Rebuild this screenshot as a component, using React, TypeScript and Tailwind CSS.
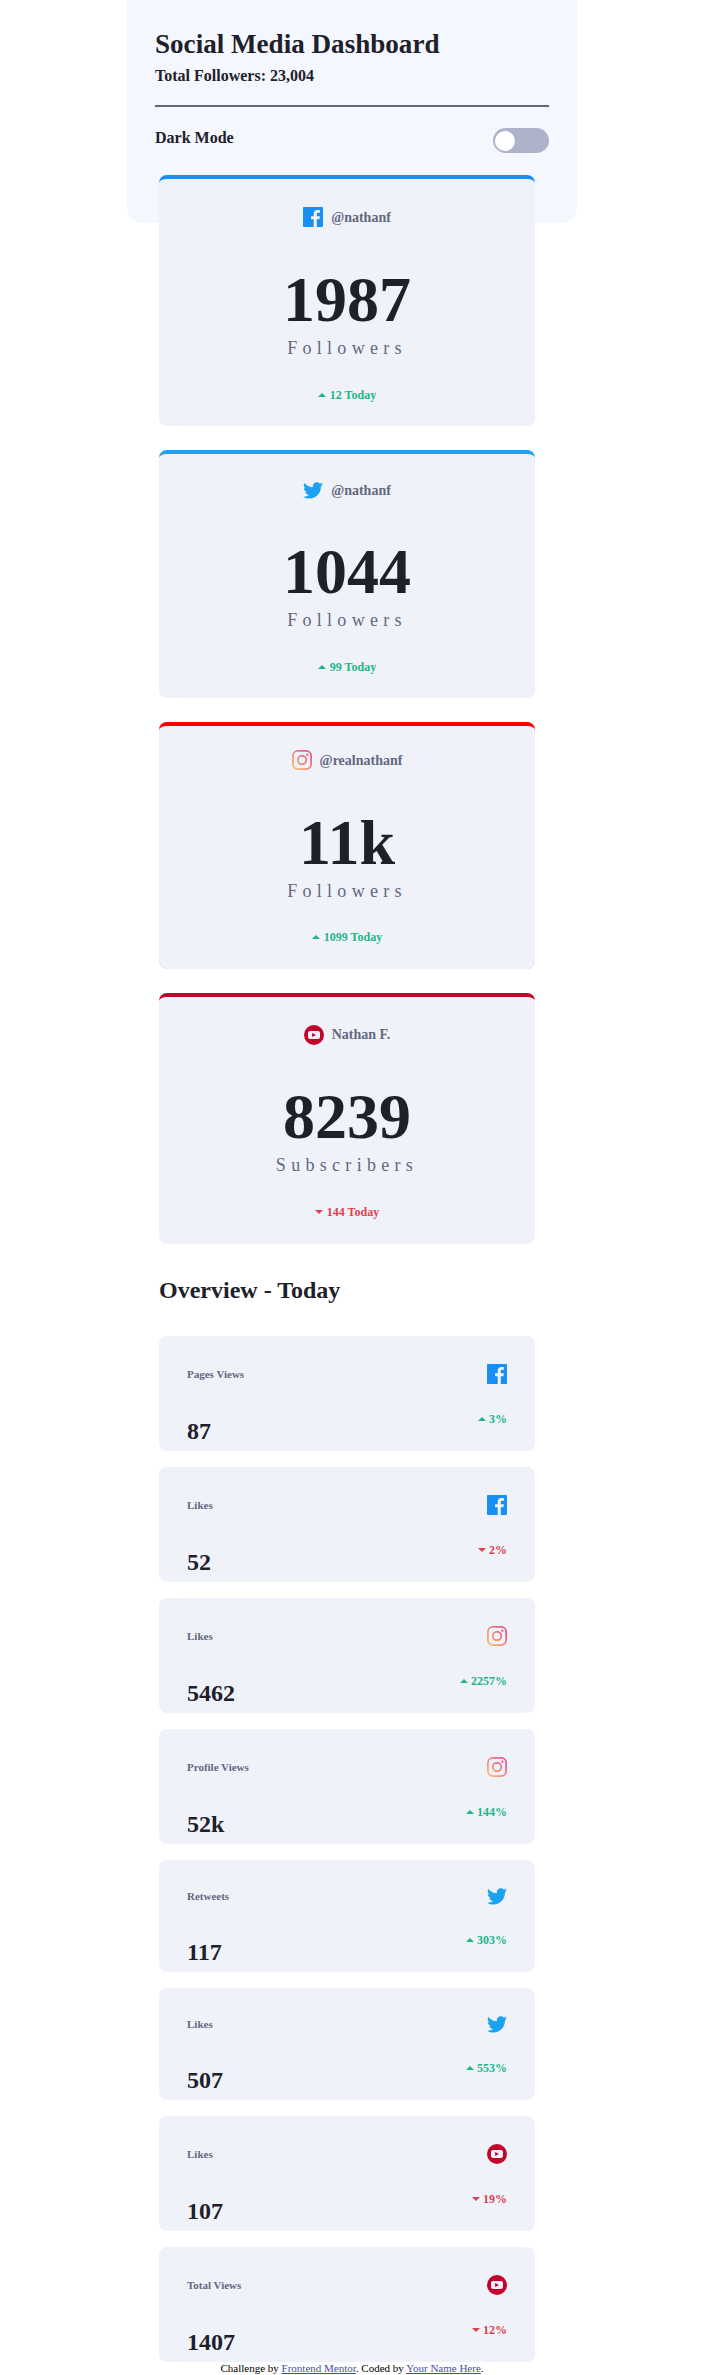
import { useId } from "react";

type Network = "facebook" | "twitter" | "instagram" | "youtube";

function NetworkIcon({ network }: { network: Network }) {
  const id = useId();
  if (network === "facebook") {
    return (
      <svg className="block shrink-0" width="20" height="20" viewBox="0 0 20 20">
        <path
          fill="#178FF5"
          d="M18.896 0H1.104C.494 0 0 .494 0 1.104v17.793C0 19.506.494 20 1.104 20h9.58v-7.745H8.076V9.237h2.606V7.01c0-2.583 1.578-3.99 3.883-3.99 1.104 0 2.052.082 2.329.119v2.7h-1.598c-1.254 0-1.496.597-1.496 1.47v1.928h2.989l-.39 3.018h-2.6V20h5.098c.608 0 1.102-.494 1.102-1.104V1.104C20 .494 19.506 0 18.896 0z"
        />
      </svg>
    );
  }
  if (network === "twitter") {
    return (
      <svg className="block shrink-0" width="20" height="17" viewBox="0 0 20 17">
        <path
          fill="#1DA1F2"
          d="M20 2.172a8.192 8.192 0 01-2.357.646 4.11 4.11 0 001.805-2.27 8.22 8.22 0 01-2.606.996A4.096 4.096 0 0013.847.248c-2.65 0-4.596 2.472-3.998 5.037A11.648 11.648 0 011.392.998a4.109 4.109 0 001.27 5.478 4.086 4.086 0 01-1.858-.513c-.045 1.9 1.318 3.679 3.291 4.075a4.113 4.113 0 01-1.853.07 4.106 4.106 0 003.833 2.849A8.25 8.25 0 010 14.658a11.616 11.616 0 006.29 1.843c7.618 0 11.922-6.434 11.662-12.205A8.354 8.354 0 0020 2.172z"
        />
      </svg>
    );
  }
  if (network === "instagram") {
    return (
      <svg className="block shrink-0" width="20" height="20" viewBox="0 0 20 20" fill="none">
        <defs>
          <linearGradient id={id} gradientUnits="userSpaceOnUse" x1="20" y1="0" x2="0" y2="20">
            <stop offset="0%" stopColor="#DF4896" />
            <stop offset="50%" stopColor="#EE877E" />
            <stop offset="100%" stopColor="#FDC468" />
          </linearGradient>
        </defs>
        <rect x="0.9" y="0.9" width="18.2" height="18.2" rx="5" stroke={`url(#${id})`} strokeWidth="1.8" />
        <circle cx="10" cy="10" r="4.23" stroke={`url(#${id})`} strokeWidth="1.8" />
        <circle cx="15.34" cy="4.66" r="1.2" fill={`url(#${id})`} />
      </svg>
    );
  }
  return (
    <svg className="block shrink-0" width="20" height="20" viewBox="0 0 20 20">
      <path
        fill="#C4032B"
        fillRule="evenodd"
        d="M10 0a10 10 0 100 20 10 10 0 000-20zM6.2 6h7.6c1.4 0 2.2.8 2.2 2.2v3.6c0 1.4-.8 2.2-2.2 2.2H6.2C4.8 14 4 13.2 4 11.8V8.2C4 6.8 4.8 6 6.2 6zM8.1 7.9v4.2L12 10z"
      />
    </svg>
  );
}

function Arrow({ up }: { up: boolean }) {
  return (
    <svg className="block shrink-0" width="8" height="4" viewBox="0 0 8 4">
      <path fill={up ? "#1EB589" : "#DC414C"} fillRule="evenodd" d={up ? "M0 4l4-4 4 4z" : "M0 0l4 4 4-4z"} />
    </svg>
  );
}

const followers: {
  network: Network;
  handle: string;
  count: string;
  unit: string;
  change: string;
  up: boolean;
  wrap: string;
  frame: string;
  handleGap: string;
  countGap: string;
  changeGap: string;
}[] = [
  { network: "facebook", handle: "@nathanf", count: "1987", unit: "Followers", change: "12 Today", up: true, wrap: "", frame: "h-[251px] rounded-lg border-[#178ff5] pt-7", handleGap: "pt-0.5", countGap: "mt-[41px]", changeGap: "mt-[30px]" },
  { network: "twitter", handle: "@nathanf", count: "1044", unit: "Followers", change: "99 Today", up: true, wrap: "", frame: "h-[248px] rounded-lg border-[#1da1f2] pt-7", handleGap: "", countGap: "mt-[41px]", changeGap: "mt-[30px]" },
  { network: "instagram", handle: "@realnathanf", count: "11k", unit: "Followers", change: "1099 Today", up: true, wrap: "rounded-lg bg-[#f9c4e0]", frame: "h-[247px] rounded-t-lg rounded-b-[9px] border-[#ff0000] pt-6", handleGap: "pt-0.5", countGap: "mt-[41px]", changeGap: "mt-[29px]" },
  { network: "youtube", handle: "Nathan F.", count: "8239", unit: "Subscribers", change: "144 Today", up: false, wrap: "", frame: "h-[251px] rounded-lg border-[#c4032b] pt-7", handleGap: "", countGap: "mt-10", changeGap: "mt-[30px]" },
];

const overview: { title: string; network: Network; value: string; change: string; up: boolean }[] = [
  { title: "Pages Views", network: "facebook", value: "87", change: "3%", up: true },
  { title: "Likes", network: "facebook", value: "52", change: "2%", up: false },
  { title: "Likes", network: "instagram", value: "5462", change: "2257%", up: true },
  { title: "Profile Views", network: "instagram", value: "52k", change: "144%", up: true },
  { title: "Retweets", network: "twitter", value: "117", change: "303%", up: true },
  { title: "Likes", network: "twitter", value: "507", change: "553%", up: true },
  { title: "Likes", network: "youtube", value: "107", change: "19%", up: false },
  { title: "Total Views", network: "youtube", value: "1407", change: "12%", up: false },
];

export default function App() {
  return (
    <div className="min-h-[2375px] bg-white font-['Liberation_Serif',serif] text-[#1e202a]">
      <header className="mx-auto h-[223px] w-[450px] rounded-b-[15px] bg-[#f5f7ff] px-7 pt-[29px]">
        <h1 className="text-[27.1px] leading-[31px] font-bold">Social Media Dashboard</h1>
        <p className="mt-[7px] text-base leading-[18px] font-bold">Total Followers: 23,004</p>
        <hr className="mt-5 border-t-2 border-[#63687e]" />
        <div className="mt-[21px] flex items-start justify-between">
          <span className="mt-px text-base leading-[18px] font-bold">Dark Mode</span>
          <button type="button" aria-label="Dark Mode" className="h-[25px] w-14 rounded-full bg-[#aeb3cb] p-0.5">
            <span className="block size-5 rounded-full bg-white" />
          </button>
        </div>
      </header>

      <main className="-mt-12 ml-[159px] w-[376px]">
        <section className="flex flex-col gap-6">
          {followers.map((f) => (
            <div key={f.network} className={f.wrap}>
              <article className={`flex flex-col items-center border-t-4 bg-[#f0f2fa] ${f.frame}`}>
                <div className="flex items-center gap-2">
                  <NetworkIcon network={f.network} />
                  <span className={`text-sm leading-4 font-bold text-[#63687e] ${f.handleGap}`}>{f.handle}</span>
                </div>
                <strong className={`text-[64px] leading-[64px] font-bold ${f.countGap}`}>{f.count}</strong>
                <span className="mt-1.5 text-lg leading-5 tracking-[5.3px] text-[#63687e]">{f.unit}</span>
                <div className={`flex items-center gap-1 ${f.changeGap}`}>
                  <Arrow up={f.up} />
                  <span className={`text-xs leading-[14px] font-bold ${f.up ? "text-[#1eb589]" : "text-[#dc414c]"}`}>
                    {f.change}
                  </span>
                </div>
              </article>
            </div>
          ))}
        </section>

        <h2 className="mt-8 text-2xl leading-7 font-bold">Overview - Today</h2>

        <section className="mt-8 flex flex-col gap-4">
          {overview.map((o) => (
            <article key={o.title + o.value} className="rounded-lg bg-[#f0f2fa] px-7 pt-7 pb-1.5">
              <div className="flex items-center justify-between">
                <span
                  className={`text-[11px] leading-3 font-bold text-[#63687e] ${o.network === "twitter" ? "pb-px" : ""}`}
                >
                  {o.title}
                </span>
                <NetworkIcon network={o.network} />
              </div>
              <div className="flex items-start justify-between">
                <strong className="mt-[33px] text-2xl leading-7 font-bold">{o.value}</strong>
                <div className="mt-7 flex items-center gap-[3px]">
                  <Arrow up={o.up} />
                  <span className={`text-xs leading-[14px] font-bold ${o.up ? "text-[#1eb589]" : "text-[#dc414c]"}`}>
                    {o.change}
                  </span>
                </div>
              </div>
            </article>
          ))}
        </section>
      </main>

      <footer className="text-center text-[11px] leading-[13px] text-black">
        Challenge by{" "}
        <a href="#" className="text-[#3e52a3] underline">
          Frontend Mentor
        </a>
        . Coded by{" "}
        <a href="#" className="text-[#3e52a3] underline">
          Your Name Here
        </a>
        .
      </footer>
    </div>
  );
}
